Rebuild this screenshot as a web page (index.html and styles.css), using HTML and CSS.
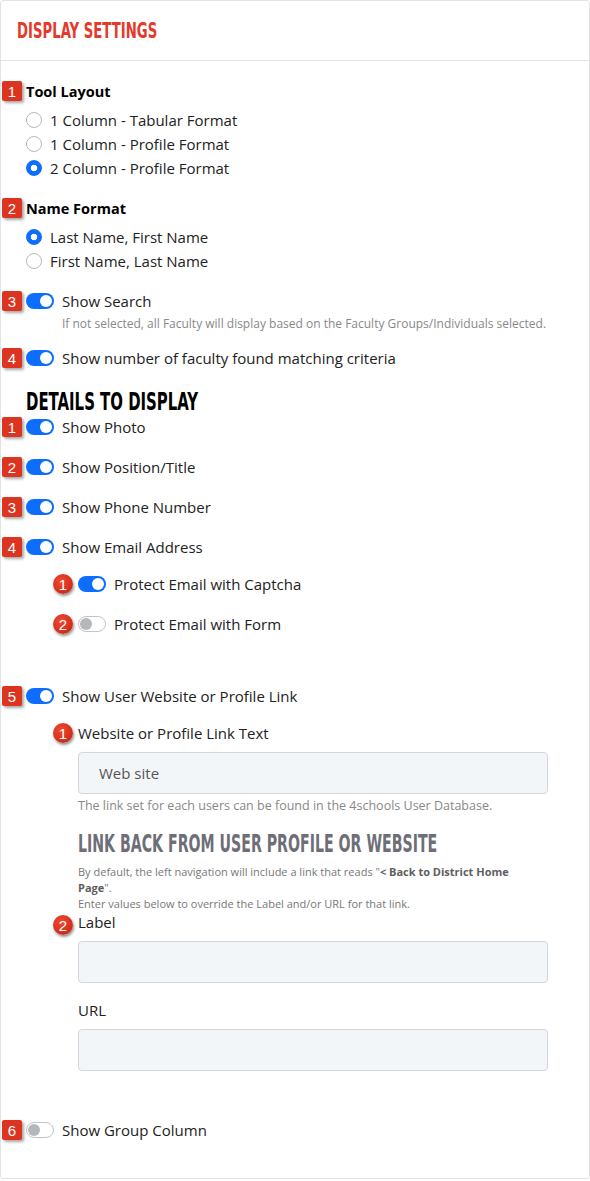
FILE: index.html
```html
<!DOCTYPE html>
<html>
<head>
  <title>Display Settings</title>
  <link rel="stylesheet" href="styles.css">
</head>
<body>
  <div class="panel">
    <div class="panel-head">
      <h1 class="title">DISPLAY SETTINGS</h1>
    </div>

    <div class="panel-body">
      <div class="row first">
        <span class="num">1</span>
        <strong class="group-name">Tool Layout</strong>
      </div>
      <ul class="radios">
        <li><span class="radio"></span>1 Column - Tabular Format</li>
        <li><span class="radio"></span>1 Column - Profile Format</li>
        <li><span class="radio on"></span>2 Column - Profile Format</li>
      </ul>

      <div class="row group">
        <span class="num">2</span>
        <strong class="group-name">Name Format</strong>
      </div>
      <ul class="radios">
        <li><span class="radio on"></span>Last Name, First Name</li>
        <li><span class="radio"></span>First Name, Last Name</li>
      </ul>

      <div class="row group">
        <span class="num">3</span>
        <span class="switch"><span class="knob"></span></span>
        <span class="label">Show Search</span>
      </div>
      <p class="help indent">If not selected, all Faculty will display based on the Faculty Groups/Individuals selected.</p>

      <div class="row after-help">
        <span class="num">4</span>
        <span class="switch"><span class="knob"></span></span>
        <span class="label">Show number of faculty found matching criteria</span>
      </div>

      <h2 class="section">DETAILS TO DISPLAY</h2>

      <div class="row">
        <span class="num">1</span>
        <span class="switch"><span class="knob"></span></span>
        <span class="label">Show Photo</span>
      </div>
      <div class="row group">
        <span class="num">2</span>
        <span class="switch"><span class="knob"></span></span>
        <span class="label">Show Position/Title</span>
      </div>
      <div class="row group">
        <span class="num">3</span>
        <span class="switch"><span class="knob"></span></span>
        <span class="label">Show Phone Number</span>
      </div>
      <div class="row group">
        <span class="num">4</span>
        <span class="switch"><span class="knob"></span></span>
        <span class="label">Show Email Address</span>
      </div>

      <div class="row sub sub-first">
        <span class="dot">1</span>
        <span class="switch"><span class="knob"></span></span>
        <span class="label">Protect Email with Captcha</span>
      </div>
      <div class="row sub group">
        <span class="dot">2</span>
        <span class="switch off"><span class="knob"></span></span>
        <span class="label">Protect Email with Form</span>
      </div>

      <div class="row spaced">
        <span class="num">5</span>
        <span class="switch"><span class="knob"></span></span>
        <span class="label">Show User Website or Profile Link</span>
      </div>

      <div class="row sub sub-first">
        <span class="dot">1</span>
        <span class="label">Website or Profile Link Text</span>
      </div>
      <div class="field">
        <input class="input" type="text" value="Web site">
      </div>
      <p class="help sub-indent">The link set for each users can be found in the 4schools User Database.</p>

      <h2 class="section muted">LINK BACK FROM USER PROFILE OR WEBSITE</h2>
      <p class="note">By default, the left navigation will include a link that reads "<b>&lt; Back to District Home</b><br><b>Page</b>".<br>Enter values below to override the Label and/or URL for that link.</p>

      <div class="row sub label-row">
        <span class="dot">2</span>
        <span class="label">Label</span>
      </div>
      <div class="field near">
        <input class="input" type="text">
      </div>

      <div class="field-label">URL</div>
      <div class="field">
        <input class="input" type="text">
      </div>

      <div class="row last">
        <span class="num">6</span>
        <span class="switch off"><span class="knob"></span></span>
        <span class="label">Show Group Column</span>
      </div>
    </div>
  </div>
</body>
</html>
```

FILE: styles.css
```css
body {
  margin: 0;
  padding: 0;
  background-color: #fff;
  font-family: "Open Sans", "DejaVu Sans", sans-serif;
  font-size: 15px;
  color: #222;
}

.panel {
  box-sizing: border-box;
  width: 590px;
  border: 1px solid #e3e3e3;
  border-radius: 3px;
  background-color: #fff;
}

.panel-head {
  height: 59px;
  display: flex;
  align-items: center;
  border-bottom: 1px solid #e3e3e3;
}

.title,
.section {
  margin: 0;
  font-family: "DejaVu Sans Condensed", "DejaVu Sans", sans-serif;
  font-stretch: condensed;
  font-weight: 700;
  white-space: nowrap;
  transform-origin: left center;
}

.title {
  margin-left: 16px;
  font-size: 22px;
  color: #e5392a;
  transform: scaleX(0.67);
}

.panel-body {
  padding: 18px 0 36px;
}

/* rows with a badge in front */
.row {
  display: flex;
  align-items: center;
  height: 24px;
  padding-left: 1px;
}

.row.group {
  margin-top: 16px;
}

.row.after-help {
  margin-top: 14px;
}

.row.sub {
  padding-left: 52px;
}

.row.sub-first {
  margin-top: 13px;
}

.row.spaced {
  margin-top: 48px;
}

.row.last {
  margin-top: 47px;
}

.group-name {
  font-size: 14.5px;
  font-weight: 700;
  color: #000;
}

.num {
  width: 20px;
  height: 20px;
  margin-right: 4px;
  display: flex;
  align-items: center;
  justify-content: center;
  background-color: #dc3421;
  border-radius: 2px;
  box-shadow: 2px 2px 3px rgba(0, 0, 0, 0.35);
  color: #fff;
  font-family: "Liberation Sans", Arial, sans-serif;
  font-size: 15px;
}

.dot {
  width: 20px;
  height: 20px;
  margin-right: 5px;
  display: flex;
  align-items: center;
  justify-content: center;
  border-radius: 50%;
  background: radial-gradient(circle at 40% 35%, #f04a33, #c41f0e);
  box-shadow: 1px 2px 3px rgba(0, 0, 0, 0.45);
  color: #fff;
  font-family: "Liberation Sans", Arial, sans-serif;
  font-size: 15px;
}

/* radio buttons */
.radios {
  list-style-type: none;
  margin: 5px 0 0;
  padding: 0 0 0 25px;
}

.radios li {
  display: flex;
  align-items: center;
  height: 24px;
}

.radio {
  box-sizing: border-box;
  width: 16px;
  height: 16px;
  margin-right: 8px;
  border: 1px solid #b9b9b9;
  border-radius: 50%;
  background-color: #fff;
}

.radio.on {
  border-color: #0d6efd;
  background: radial-gradient(circle, #fff 0 3px, #0d6efd 3.6px);
}

/* toggle switches */
.switch {
  box-sizing: border-box;
  width: 28px;
  height: 16px;
  margin-right: 8px;
  padding: 0 2px;
  display: flex;
  align-items: center;
  justify-content: flex-end;
  border-radius: 8px;
  background-color: #0d6efd;
}

.knob {
  width: 12px;
  height: 12px;
  border-radius: 50%;
  background-color: #fff;
}

.switch.off {
  justify-content: flex-start;
  border: 1px solid #c4c4c4;
  background-color: #fff;
  padding: 0 1px;
}

.switch.off .knob {
  background-color: #b4b8bd;
}

/* text */
.help {
  margin: 3px 0 0;
  font-size: 12px;
  line-height: 16px;
  color: #888;
}

.help.indent {
  padding-left: 61px;
}

.help.sub-indent {
  margin-top: 4px;
  padding-left: 77px;
  font-size: 12.5px;
}

.section {
  margin-top: 19px;
  margin-left: 25px;
  font-size: 25px;
  line-height: 26px;
  color: #000;
  transform: scaleX(0.664);
}

.section.muted {
  margin-top: 17px;
  margin-left: 77px;
  color: #6e6e76;
  transform: scaleX(0.629);
}

.note {
  width: 470px;
  margin: 7px 0 0 77px;
  font-size: 11px;
  line-height: 16px;
  color: #777;
}

.note b {
  color: #5e5e5e;
}

.row.label-row {
  height: 20px;
  align-items: flex-start;
}

.label-row .dot {
  margin-top: 3px;
}

.label-row .label {
  line-height: 20px;
}

/* text fields */
.field {
  margin: 7px 0 0 77px;
}

.field.near {
  margin-top: 9px;
}

.input {
  box-sizing: border-box;
  width: 470px;
  height: 42px;
  padding: 0 20px;
  border: 1px solid #d3d7dc;
  border-radius: 4px;
  background-color: #f3f6f9;
  font-family: inherit;
  font-size: 15px;
  color: #555;
}

.field-label {
  margin: 15px 0 0 77px;
  line-height: 24px;
}
```
